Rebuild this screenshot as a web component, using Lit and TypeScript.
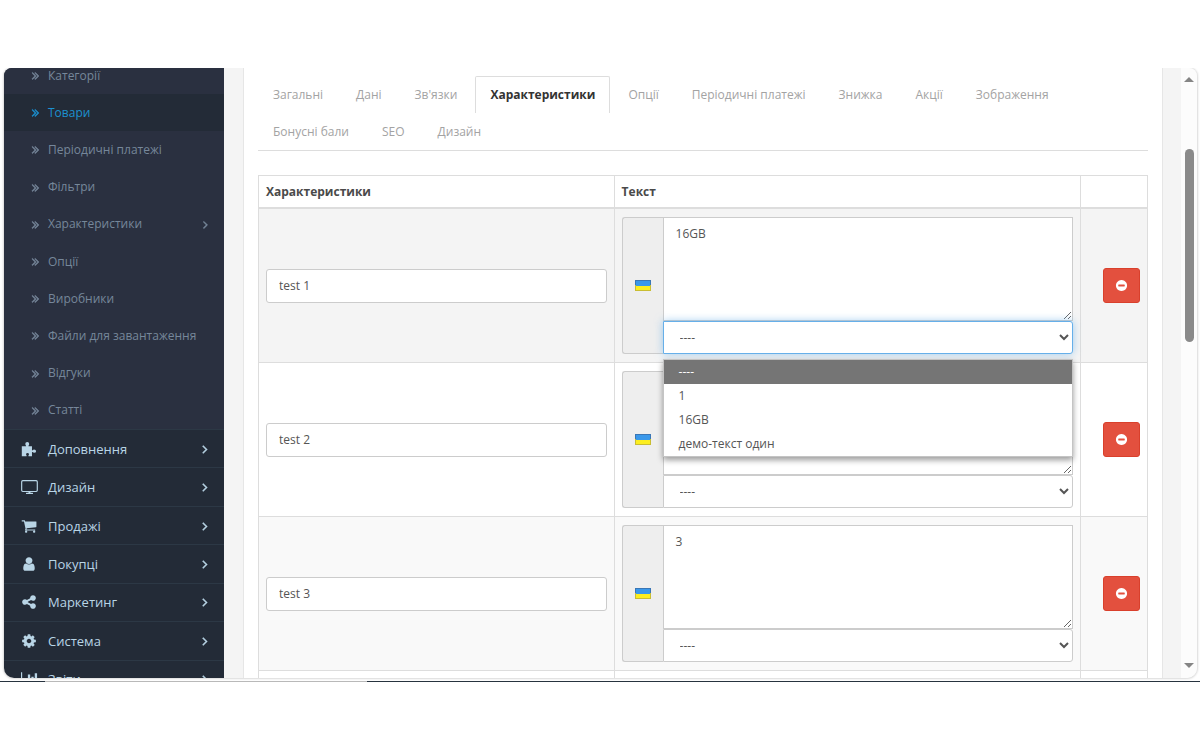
import { LitElement, html, css, svg } from "lit";
import { customElement, state } from "lit/decorators.js";
import { classMap } from "lit/directives/class-map.js";

const ICONS: Record<string, ReturnType<typeof svg>> = {
  angle: svg`<path d="M1171 960q0 13-10 23l-466 466q-10 10-23 10t-23-10l-50-50q-10-10-10-23t10-23l393-393-393-393q-10-10-10-23t10-23l50-50q10-10 23-10t23 10l466 466q10 10 10 23z"/>`,
  double: svg`<path d="M979 960q0 13-10 23l-466 466q-10 10-23 10t-23-10l-50-50q-10-10-10-23t10-23l393-393-393-393q-10-10-10-23t10-23l50-50q10-10 23-10t23 10l466 466q10 10 10 23zm384 0q0 13-10 23l-466 466q-10 10-23 10t-23-10l-50-50q-10-10-10-23t10-23l393-393-393-393q-10-10-10-23t10-23l50-50q10-10 23-10t23 10l466 466q10 10 10 23z"/>`,
  minus: svg`<path d="M1344 960v-128q0-26-19-45t-45-19h-768q-26 0-45 19t-19 45v128q0 26 19 45t45 19h768q26 0 45-19t19-45zm320-64q0 209-103 385.5t-279.5 279.5-385.5 103-385.5-103-279.5-279.5-103-385.5 103-385.5 279.5-279.5 385.5-103 385.5 103 279.5 279.5 103 385.5z"/>`,
  user: svg`<path d="M1536 1399q0 109-62.5 187t-150.5 78h-854q-88 0-150.5-78t-62.5-187q0-85 8.5-160.5t31.5-152 58.5-131 94-89 134.5-34.5q131 128 313 128t313-128q76 0 134.5 34.5t94 89 58.5 131 31.5 152 8.5 160.5zm-256-887q0 159-112.5 271.5t-271.5 112.5-271.5-112.5-112.5-271.5 112.5-271.5 271.5-112.5 271.5 112.5 112.5 271.5z"/>`,
  cog: svg`<path d="M1152 896q0-106-75-181t-181-75-181 75-75 181 75 181 181 75 181-75 75-181zm512-109v222q0 12-8 23t-20 13l-185 28q-19 54-39 91 35 50 107 138 10 12 10 25t-9 23q-27 37-99 108t-94 71q-12 0-26-9l-138-108q-44 23-91 38-16 136-29 186-7 28-36 28h-222q-14 0-24.5-8.5t-11.5-21.5l-28-184q-49-16-90-37l-141 107q-10 9-25 9-14 0-25-11-126-114-165-168-7-10-7-23 0-12 8-23 15-21 51-66.5t54-70.5q-27-50-41-99l-183-27q-13-2-21-12.5t-8-23.5v-222q0-12 8-23t19-13l186-28q14-46 39-92-40-57-107-138-10-12-10-24 0-10 9-23 26-36 98.5-107.5t94.5-71.5q13 0 26 10l138 107q44-23 91-38 16-136 29-186 7-28 36-28h222q14 0 24.5 8.5t11.5 21.5l28 184q49 16 90 37l142-107q9-9 24-9 13 0 25 10 129 119 165 170 7 8 7 22 0 12-8 23-15 21-51 66.5t-54 70.5q26 50 41 98l183 28q13 2 21 12.5t8 23.5z"/>`,
  share: svg`<path d="M1344 1024q133 0 226.5 93.5t93.5 226.5-93.5 226.5-226.5 93.5-226.5-93.5-93.5-226.5q0-12 2-34l-360-180q-92 86-218 86-133 0-226.5-93.5t-93.5-226.5 93.5-226.5 226.5-93.5q126 0 218 86l360-180q-2-22-2-34 0-133 93.5-226.5t226.5-93.5 226.5 93.5 93.5 226.5-93.5 226.5-226.5 93.5q-126 0-218-86l-360 180q2 22 2 34t-2 34l360 180q92-86 218-86z"/>`,
  cart: svg`<path d="M704 1536q0 52-38 90t-90 38-90-38-38-90 38-90 90-38 90 38 38 90zm896 0q0 52-38 90t-90 38-90-38-38-90 38-90 90-38 90 38 38 90zm128-1088v512q0 24-16.5 42.5t-40.5 21.5l-1044 122q13 60 13 70 0 16-24 64h920q26 0 45 19t19 45-19 45-45 19h-1024q-26 0-45-19t-19-45q0-11 8-31.5t16-36 21.5-40 15.5-29.5l-177-823h-204q-26 0-45-19t-19-45 19-45 45-19h256q16 0 28.5 6.5t19.5 15.5 13 24.5 8 26 5.5 29.5 4.5 26h1201q26 0 45 19t19 45z"/>`,
  puzzle: svg`<path d="M90 600h420q90 0 50-80-80-90-80-190 0-230 220-230t220 230q0 100-80 190-40 80 50 80h340v400q0 80 70 40 80-80 160-80 230 0 230 180t-230 180q-80 0-160-80-70-40-70 40v420H860q-60 0-30-80 60-70 60-150 0-130-160-130t-160 130q0 80 60 150 30 80-30 80H90z"/>`,
  tv: svg`<path d="M200 120h1500q190 0 190 190v960q0 190-190 190h-640v90h230q60 0 60 60t-60 60H610q-60 0-60-60t60-60h230v-90H200q-190 0-190-190V310q0-190 190-190zm20 130q-80 0-80 80v920q0 80 80 80h1460q80 0 80-80V330q0-80-80-80z"/>`,
  chart: svg`<path d="M0 128h130v1400h1900v130H0zM380 900h260v520H380zM770 400h260v1020H770zM1160 640h260v780h-260zM1540 250h260v1170h-260z"/>`,
};

const icon = (name: string) =>
  html`<svg class="icon ${name}" viewBox="0 0 1792 1792" aria-hidden="true">${ICONS[name]}</svg>`;

const SUBMENU = [
  "Категорії",
  "Товари",
  "Періодичні платежі",
  "Фільтри",
  "Характеристики",
  "Опції",
  "Виробники",
  "Файли для завантаження",
  "Відгуки",
  "Статті",
];

const MENU = [
  ["puzzle", "Доповнення"],
  ["tv", "Дизайн"],
  ["cart", "Продажі"],
  ["user", "Покупці"],
  ["share", "Маркетинг"],
  ["cog", "Система"],
  ["chart", "Звіти"],
];

const TABS = [
  "Загальні",
  "Дані",
  "Зв'язки",
  "Характеристики",
  "Опції",
  "Періодичні платежі",
  "Знижка",
  "Акції",
  "Зображення",
  "Бонусні бали",
  "SEO",
  "Дизайн",
];

const OPTIONS = ["----", "1", "16GB", "демо-текст один"];

@customElement("admin-sidebar")
export class AdminSidebar extends LitElement {
  static styles = css`
    :host {
      display: block;
      background: #232b37;
      overflow: hidden;
      font-size: 13px;
    }
    nav {
      margin-top: -11px;
    }
    ul {
      list-style: none;
      margin: 0;
      padding: 0;
      display: grid;
      grid-auto-rows: 1fr;
    }
    .sub {
      height: 372px;
      background: #2a3040;
      font-size: 12px;
    }
    .main {
      height: 269px;
    }
    a {
      box-sizing: border-box;
      display: flex;
      align-items: center;
      height: 100%;
      color: #b9d5e6;
      text-decoration: none;
      padding: 0 12px 0 17px;
      white-space: nowrap;
    }
    .main a {
      border-top: 1px solid #2c3845;
    }
    .sub a {
      color: #76879a;
      padding-left: 25px;
    }
    .sub .active a {
      color: #1c91d0;
      background: #232b37;
    }
    .label {
      flex: 1;
    }
    .icon {
      width: 14px;
      height: 14px;
      fill: currentColor;
      overflow: visible;
    }
    .angle,
    .double {
      stroke: currentColor;
      stroke-width: 70px;
    }
    .lead {
      display: flex;
      width: 19px;
    }
    .sub .icon {
      width: 13px;
      height: 13px;
    }
    .main .lead {
      width: 27px;
    }
    .main .lead .icon {
      width: 16px;
      height: 16px;
    }
  `;

  render() {
    return html`<nav>
      <ul class="sub">
        ${SUBMENU.map(
          (t) => html`<li class=${classMap({ active: t === "Товари" })}>
            <a href="#"
              ><span class="lead">${icon("double")}</span><span class="label">${t}</span>${t ===
              "Характеристики"
                ? icon("angle")
                : ""}</a
            >
          </li>`
        )}
      </ul>
      <ul class="main">
        ${MENU.map(
          ([i, t]) => html`<li>
            <a href="#"
              ><span class="lead">${icon(i)}</span><span class="label">${t}</span>${icon("angle")}</a
            >
          </li>`
        )}
      </ul>
    </nav>`;
  }
}

@customElement("attribute-table")
export class AttributeTable extends LitElement {
  static styles = css`
    :host {
      display: block;
    }
    table {
      width: 100%;
      border-collapse: collapse;
      table-layout: fixed;
    }
    .c1 {
      width: 40%;
    }
    .c3 {
      width: 67px;
    }
    th {
      border: 1px solid #ddd;
      border-bottom-width: 2px;
      padding: 8px 7px 7px;
      height: 16px;
      line-height: 16px;
      text-align: left;
      font-weight: 700;
      color: #4a4a4a;
    }
    td {
      border: 1px solid #ddd;
      padding: 8px 7px;
      vertical-align: middle;
    }
    tr.hover {
      background: #f4f4f4;
    }
    tr.odd {
      background: #f9f9f9;
    }
    .action {
      text-align: right;
    }
    input,
    textarea,
    select {
      box-sizing: border-box;
      display: block;
      width: 100%;
      margin: 0;
      border: 1px solid #ccc;
      border-radius: 3px;
      background: #fff;
      color: #555;
      font: inherit;
      line-height: 18px;
      outline: none;
    }
    input {
      height: 34px;
      padding: 8px 12px;
    }
    .group {
      display: flex;
    }
    .addon {
      box-sizing: border-box;
      flex: none;
      width: 41px;
      display: flex;
      align-items: center;
      justify-content: center;
      border: 1px solid #ccc;
      border-right: 0;
      border-radius: 3px 0 0 3px;
      background: #eee;
    }
    .flag {
      width: 16px;
      height: 11px;
    }
    .fields {
      position: relative;
      flex: 1;
      min-width: 0;
    }
    textarea {
      height: 104px;
      padding: 7px 12px;
      border-radius: 0;
      resize: vertical;
    }
    select {
      height: 33px;
      padding: 0 0 0 12px;
      border-radius: 0 3px 3px 0;
    }
    select.open {
      position: relative;
      border-color: #66afe9;
      box-shadow: 0 0 8px rgba(102, 175, 233, 0.6);
    }
    .popup {
      position: absolute;
      z-index: 2;
      top: calc(100% + 5px);
      left: 0;
      right: 0;
      margin: 0;
      padding: 0;
      list-style: none;
      background: #fff;
      border: 1px solid #c4c4c4;
      box-shadow: 0 3px 6px rgba(0, 0, 0, 0.4);
    }
    .popup li {
      height: 24px;
      line-height: 24px;
      padding: 0 15px;
      color: #555;
    }
    .popup li.current {
      background: #757575;
      color: #fff;
    }
    button {
      width: 37px;
      height: 35px;
      padding: 0;
      border: 1px solid #d9402c;
      border-radius: 3px;
      background: #e3503e;
      color: #fff;
      display: inline-flex;
      align-items: center;
      justify-content: center;
      vertical-align: middle;
    }
    .icon {
      width: 13px;
      height: 13px;
      fill: currentColor;
    }
  `;

  @state() private rows = [
    { name: "test 1", text: "16GB", cls: "hover", open: true },
    { name: "test 2", text: "", cls: "", open: false },
    { name: "test 3", text: "3", cls: "odd", open: false },
    { name: "test 4", text: "", cls: "", open: false },
  ];

  private flag() {
    return html`<svg class="flag" viewBox="0 0 16 11" role="img" aria-label="Українська">
      <rect width="16" height="11" fill="#3a76b5" />
      <rect y="5" width="16" height="6" fill="#c9bd32" />
      <rect x="1" y="1" width="14" height="5" fill="#3a98ea" />
      <rect x="1" y="6" width="14" height="4" fill="#fcee1f" />
    </svg>`;
  }

  render() {
    return html`<table>
      <colgroup>
        <col class="c1" />
        <col />
        <col class="c3" />
      </colgroup>
      <thead>
        <tr>
          <th>Характеристики</th>
          <th>Текст</th>
          <th></th>
        </tr>
      </thead>
      <tbody>
        ${this.rows.map(
          (r) => html`<tr class=${r.cls}>
            <td><input type="text" aria-label="Характеристики" .value=${r.name} /></td>
            <td>
              <div class="group">
                <span class="addon">${this.flag()}</span>
                <div class="fields">
                  <textarea aria-label="Текст" .value=${r.text}></textarea>
                  <select class=${classMap({ open: r.open })} aria-label="Значення">
                    ${OPTIONS.map((o) => html`<option>${o}</option>`)}
                  </select>
                  ${r.open
                    ? html`<ul class="popup" role="listbox">
                        ${OPTIONS.map(
                          (o, i) =>
                            html`<li
                              role="option"
                              aria-selected=${i === 0}
                              class=${classMap({ current: i === 0 })}
                            >
                              ${o}
                            </li>`
                        )}
                      </ul>`
                    : ""}
                </div>
              </div>
            </td>
            <td class="action">
              <button type="button" aria-label="Видалити">${icon("minus")}</button>
            </td>
          </tr>`
        )}
      </tbody>
    </table>`;
  }
}

@customElement("app-root")
export class AppRoot extends LitElement {
  static styles = css`
    :host {
      display: block;
      box-sizing: border-box;
      height: 100vh;
      padding-top: 68px;
      overflow: hidden;
      background: #fff;
      color: #555;
      font: 12px/18px "Open Sans", "Noto Sans", sans-serif;
    }
    .frame {
      display: grid;
      grid-template-columns: 220px minmax(0, 1fr) 16px;
      height: calc(100vh - 140px);
      margin: 0 3px 0 4px;
      border-radius: 8px 8px 10px 10px;
      overflow: hidden;
      background: #f4f4f4;
      box-shadow: 0 0 2px 1px #dadada;
      clip-path: inset(0 -3px -3px -3px);
    }
    main {
      overflow: hidden;
      padding: 0 18px 0 19px;
    }
    .panel {
      height: 100%;
      box-sizing: border-box;
      padding: 8px 14px 0;
      background: #fff;
      border: solid #e6e6e6;
      border-width: 0 1px;
    }
    .tabs {
      display: flex;
      flex-wrap: wrap;
      list-style: none;
      margin: 0 0 24px;
      padding: 0;
      border-bottom: 1px solid #ddd;
    }
    .tabs li {
      margin-right: 3px;
    }
    .tabs a {
      display: block;
      padding: 9px 14px;
      border: 1px solid transparent;
      border-bottom: 0;
      border-radius: 2px 2px 0 0;
      color: #a3a3a3;
      text-decoration: none;
    }
    .tabs .active {
      color: #333;
      font-weight: 700;
      border-color: #ddd;
    }
    .scroll {
      display: flex;
      flex-direction: column;
      align-items: center;
      background: #fcfcfc;
      padding: 9px 0 10px;
    }
    .arrow {
      border: 5px solid transparent;
      border-top-width: 0;
      border-bottom-color: #858585;
    }
    .arrow.down {
      border-width: 5px 5px 0;
      border-color: #858585 transparent transparent;
    }
    .track {
      flex: 1;
      display: grid;
      grid-template-rows: 67fr 194fr 322fr;
    }
    .thumb {
      grid-row: 2;
      width: 9px;
      border-radius: 5px;
      background: #8a8a8a;
    }
    .edge {
      height: 1px;
      margin-top: 3px;
      background: linear-gradient(
        90deg,
        #27333f 0 45px,
        #b9b9b9 45px 367px,
        #27333f 367px
      );
    }
  `;

  render() {
    return html`<div class="frame">
        <admin-sidebar></admin-sidebar>
        <main>
          <div class="panel">
            <ul class="tabs">
              ${TABS.map(
                (t) => html`<li>
                  <a href="#" class=${classMap({ active: t === "Характеристики" })}>${t}</a>
                </li>`
              )}
            </ul>
            <attribute-table></attribute-table>
          </div>
        </main>
        <div class="scroll">
          <span class="arrow"></span>
          <div class="track"><div class="thumb"></div></div>
          <span class="arrow down"></span>
        </div>
      </div>
      <div class="edge"></div>`;
  }
}
